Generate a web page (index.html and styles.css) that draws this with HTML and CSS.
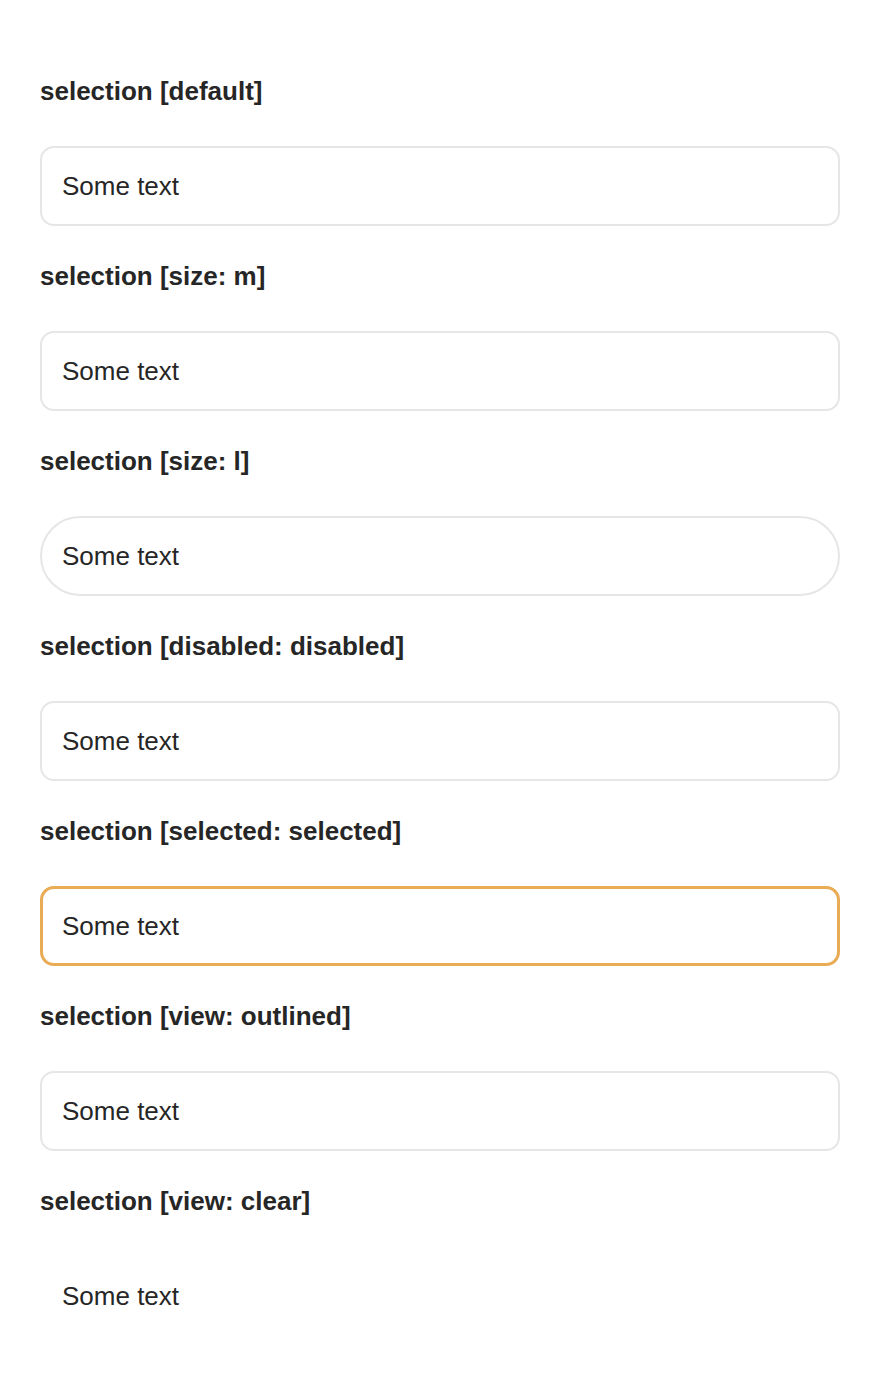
FILE: index.html
```
<!DOCTYPE html>
<html>
<head>
<meta charset="utf-8">
<link rel="stylesheet" href="styles.css">
</head>
<body>
<main class="page">
  <section class="sample">
    <h2 class="title">selection [default]</h2>
    <div class="selection">Some text</div>
  </section>
  <section class="sample">
    <h2 class="title">selection [size: m]</h2>
    <div class="selection">Some text</div>
  </section>
  <section class="sample">
    <h2 class="title">selection [size: l]</h2>
    <div class="selection selection-l">Some text</div>
  </section>
  <section class="sample">
    <h2 class="title">selection [disabled: disabled]</h2>
    <div class="selection">Some text</div>
  </section>
  <section class="sample">
    <h2 class="title">selection [selected: selected]</h2>
    <div class="selection selection-selected">Some text</div>
  </section>
  <section class="sample">
    <h2 class="title">selection [view: outlined]</h2>
    <div class="selection">Some text</div>
  </section>
  <section class="sample">
    <h2 class="title">selection [view: clear]</h2>
    <div class="selection selection-clear">Some text</div>
  </section>
</main>
</body>
</html>
```
FILE: styles.css
```
html, body {
  margin: 0;
  padding: 0;
  background: #ffffff;
}
body {
  font-family: "Liberation Sans", Arial, sans-serif;
  color: #262626;
}
.page {
  padding: 77px 40px 40px;
  display: flex;
  flex-direction: column;
  gap: 36px;
}
.sample {
  display: flex;
  flex-direction: column;
}
.title {
  margin: 0 0 41px;
  font-size: 26px;
  line-height: 28px;
  font-weight: bold;
  color: #262626;
}
.selection {
  box-sizing: border-box;
  height: 80px;
  display: flex;
  align-items: center;
  padding: 0 20px;
  border: 2px solid #e6e6e6;
  border-radius: 14px;
  font-size: 26px;
  line-height: 30px;
  color: #262626;
  background: #fff;
}
.selection-l {
  border-radius: 40px;
}
.selection-selected {
  border: 3px solid #e9ab54;
  padding: 0 19px;
}
.selection-clear {
  border-color: transparent;
}
```
